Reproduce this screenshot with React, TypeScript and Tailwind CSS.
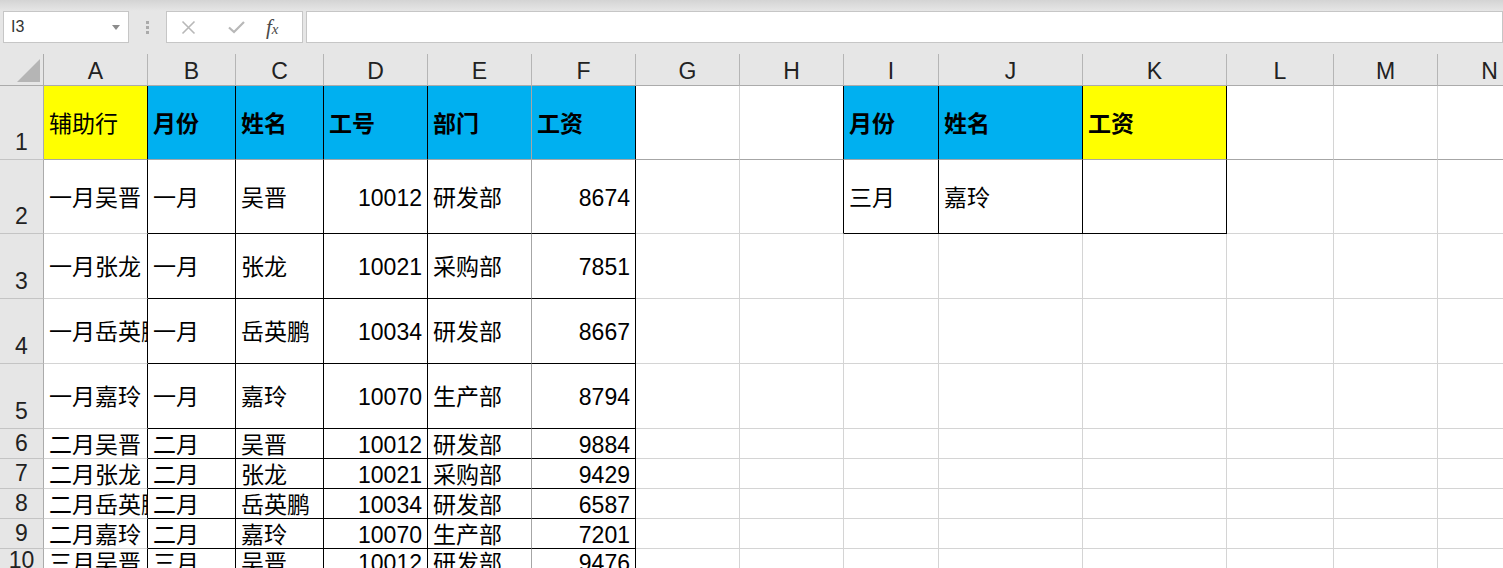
import React from "react";

type Cell = { t: string; bold?: boolean; num?: boolean; bg?: string };

const letters = ["A", "B", "C", "D", "E", "F", "G", "H", "I", "J", "K", "L", "M", "N"];
const rowNums = [1, 2, 3, 4, 5, 6, 7, 8, 9, 10];

const blue = "bg-[#00b0f0]";
const yellow = "bg-[#ffff00]";

const body: [string, string, string, string, string, string][] = [
  ["一月吴晋", "一月", "吴晋", "10012", "研发部", "8674"],
  ["一月张龙", "一月", "张龙", "10021", "采购部", "7851"],
  ["一月岳英鹏", "一月", "岳英鹏", "10034", "研发部", "8667"],
  ["一月嘉玲", "一月", "嘉玲", "10070", "生产部", "8794"],
  ["二月吴晋", "二月", "吴晋", "10012", "研发部", "9884"],
  ["二月张龙", "二月", "张龙", "10021", "采购部", "9429"],
  ["二月岳英鹏", "二月", "岳英鹏", "10034", "研发部", "6587"],
  ["二月嘉玲", "二月", "嘉玲", "10070", "生产部", "7201"],
  ["三月吴晋", "三月", "吴晋", "10012", "研发部", "9476"],
];

function cellAt(r: number, c: number): Cell | null {
  if (r === 1) {
    const head: Record<number, Cell> = {
      0: { t: "辅助行", bg: yellow },
      1: { t: "月份", bold: true, bg: blue },
      2: { t: "姓名", bold: true, bg: blue },
      3: { t: "工号", bold: true, bg: blue },
      4: { t: "部门", bold: true, bg: blue },
      5: { t: "工资", bold: true, bg: blue },
      8: { t: "月份", bold: true, bg: blue },
      9: { t: "姓名", bold: true, bg: blue },
      10: { t: "工资", bold: true, bg: yellow },
    };
    return head[c] ?? null;
  }
  if (r === 2 && c === 8) return { t: "三月" };
  if (r === 2 && c === 9) return { t: "嘉玲" };
  if (c <= 5) {
    const v = body[r - 2][c];
    return { t: v, num: c === 3 || c === 5 };
  }
  return null;
}

function rightBorder(r: number, c: number) {
  if (c === 4) return "border-r-[#a6a6a6]";
  if (c <= 5) return "border-r-black";
  if (r <= 2 && c >= 7 && c <= 10) return "border-r-black";
  return "border-r-[#d4d4d4]";
}

function bottomBorder(r: number, c: number) {
  if (r === 1) return "border-b-[#a6a6a6]";
  if (c >= 1 && c <= 5) return "border-b-black";
  if (r === 2 && c >= 8 && c <= 10) return "border-b-black";
  return "border-b-[#d4d4d4]";
}

function FormulaBar() {
  return (
    <div className="flex h-[32px] pl-[3px]">
      <div className="relative flex w-[126px] items-center border border-[#c6c6c6] bg-white pl-[7px] text-[16px] text-[#333]">
        I3
        <svg className="absolute right-[8px] top-[13px]" width="8" height="5" viewBox="0 0 8 5">
          <path d="M0 0H8L4 5Z" fill="#8c8c8c" />
        </svg>
      </div>
      <div className="flex w-[37px] flex-col items-center justify-center gap-[2px]">
        <span className="h-[3px] w-[3px] bg-[#aaaaaa]" />
        <span className="h-[3px] w-[3px] bg-[#aaaaaa]" />
        <span className="h-[3px] w-[3px] bg-[#aaaaaa]" />
      </div>
      <div className="flex w-[137px] items-center border border-[#c6c6c6] bg-white">
        <svg className="ml-[14px]" width="15" height="15" viewBox="0 0 15 15">
          <path d="M1.5 1.5L13.5 13.5M13.5 1.5L1.5 13.5" stroke="#b8b8b8" strokeWidth="1.6" />
        </svg>
        <svg className="ml-[32px]" width="17" height="13" viewBox="0 0 17 13">
          <path d="M1 6.5L6 11L16 1" stroke="#b8b8b8" strokeWidth="2.2" fill="none" />
        </svg>
        <span className="ml-[21px] font-['Liberation_Serif',serif] text-[21px] italic leading-none text-[#4a4a4a]">
          f<span className="text-[15px]">x</span>
        </span>
      </div>
      <div className="ml-[3px] flex-1 border border-[#c6c6c6] bg-white" />
    </div>
  );
}

function Sheet() {
  return (
    <div className="grid grid-cols-[44px_104px_88px_88px_104px_104px_104px_104px_104px_95px_144px_144px_107px_104px_104px] grid-rows-[32px_74px_74px_65px_65px_65px_30px_30px_30px_30px]">
      <div className="relative border-r border-b border-r-[#ababab] border-b-[#ababab]">
        <svg className="absolute left-[17px] top-[5px]" width="24" height="24" viewBox="0 0 24 24">
          <path d="M23 0V23H0Z" fill="#b5b5b5" />
        </svg>
      </div>
      {letters.map((l) => (
        <div
          key={l}
          className="flex items-center justify-center border-r border-b border-r-[#b5b5b5] border-b-[#ababab] pt-[3px] text-[23px] text-[#222]"
        >
          {l}
        </div>
      ))}
      {rowNums.map((r) => (
        <React.Fragment key={r}>
          <div className="flex items-end justify-center border-r border-b border-r-[#ababab] border-b-[#c4c4c4] pb-[2px] text-[23px] leading-none text-[#222]">
            <span className={r >= 6 ? "pb-[1px]" : "pb-[3px]"}>{r}</span>
          </div>
          {letters.map((_, c) => {
            const cell = cellAt(r, c);
            return (
              <div
                key={c}
                className={`flex items-center overflow-hidden whitespace-nowrap border-r border-b pt-[3px] text-[23px] leading-none text-black ${rightBorder(r, c)} ${bottomBorder(r, c)} ${cell?.bg ?? "bg-white"} ${cell?.num ? "justify-end pr-[5px]" : "pl-[5px]"} ${cell?.bold ? "font-bold" : ""}`}
              >
                {cell?.t}
              </div>
            );
          })}
        </React.Fragment>
      ))}
    </div>
  );
}

export default function App() {
  return (
    <div className="h-[568px] w-[1503px] overflow-hidden bg-[#e6e6e6] font-['Liberation_Sans','Noto_Sans_CJK_SC',sans-serif]">
      <div className="h-[11px] bg-gradient-to-b from-[#d4d4d4] to-[#e6e6e6]" />
      <FormulaBar />
      <div className="h-[11px]" />
      <Sheet />
    </div>
  );
}
